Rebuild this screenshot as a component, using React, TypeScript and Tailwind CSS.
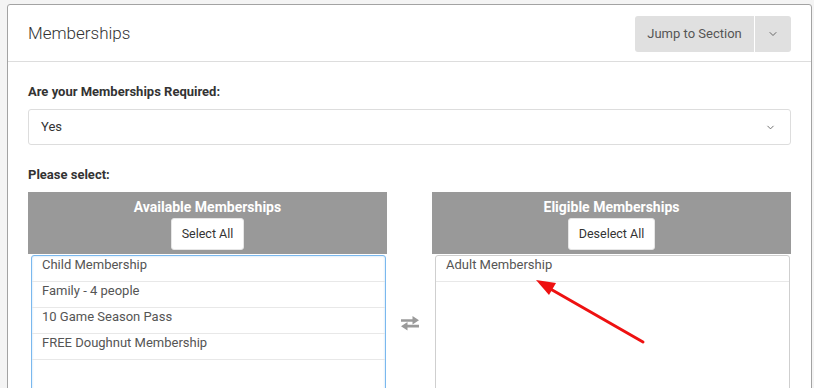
import { ChevronDown } from "lucide-react";

const available = ["Child Membership", "Family - 4 people", "10 Game Season Pass", "FREE Doughnut Membership"];
const eligible = ["Adult Membership"];

function ExchangeIcon() {
  return (
    <svg width="22" height="16" viewBox="0 0 22 16" fill="#9a9a9a">
      <path d="M2 4.2h11.5V1l6.5 4.3-6.5 4.2V6.8H2z" />
      <path d="M20 9.8H8.5V6.9L2 11.2l6.5 4.3v-3.1H20z" />
    </svg>
  );
}

function ListPanel({
  title,
  action,
  items,
  focused,
}: {
  title: string;
  action: string;
  items: string[];
  focused?: boolean;
}) {
  return (
    <div className="flex w-[359px] flex-col">
      <div className="flex h-[62px] flex-col items-center bg-[#999999] pt-[5px]">
        <div className="text-[14px] font-bold leading-[20px] text-white">{title}</div>
        <button className="mt-[1px] h-[32px] rounded-[3px] border border-[#e6e6e6] bg-white px-[10px] text-[12.5px] text-[#333]">
          {action}
        </button>
      </div>
      <div
        className={`ml-[3px] mr-[1px] mt-[1px] h-[140px] rounded-t-[3px] border ${
          focused ? "border-[#7ab8ee] shadow-[inset_0_0_2px_rgba(102,175,233,0.5)]" : "border-[#cfcfcf]"
        }`}
      >
        {items.map((item) => (
          <div
            key={item}
            className="h-[26px] border-b border-[#e8e8e8] pl-[10px] text-[13px] leading-[18px] text-[#555]"
          >
            {item}
          </div>
        ))}
      </div>
    </div>
  );
}

export default function App() {
  return (
    <div className="h-[388px] w-[814px] overflow-hidden bg-[#f4f4f4] pl-[7px] pt-[4px] font-['Roboto',sans-serif]">
      <div className="relative h-[400px] w-[805px] rounded-[3px] border border-[#a3a3a3] bg-white">
        <div className="flex h-[57px] items-center justify-between border-b border-[#dddddd] px-[20px] pt-[1px]">
          <h2 className="text-[17px] font-light text-[#333]">Memberships</h2>
          <div className="flex h-[36px] overflow-hidden rounded-[3px] bg-[#e0e0e0] text-[13px] text-[#555]">
            <button className="w-[120px] border-r border-white">Jump to Section</button>
            <button className="flex w-[36px] items-center justify-center">
              <ChevronDown size={12} strokeWidth={2} color="#666" />
            </button>
          </div>
        </div>

        <div className="px-[20px] pt-[21px]">
          <div className="text-[13px] font-bold leading-[18px] text-[#333]">Are your Memberships Required:</div>
          <div className="mt-[8px] flex h-[36px] items-center justify-between rounded-[3px] border border-[#dddddd] pl-[12px] pr-[14px] text-[13px] text-[#333]">
            <span>Yes</span>
            <ChevronDown size={11} strokeWidth={2} color="#666" />
          </div>

          <div className="mt-[21px] text-[13px] font-bold leading-[18px] text-[#333]">Please select:</div>

          <div className="mt-[8px] flex items-start justify-between">
            <ListPanel title="Available Memberships" action="Select All" items={available} focused />
            <div className="flex h-[200px] w-[45px] items-start justify-center pt-[123px]">
              <ExchangeIcon />
            </div>
            <ListPanel title="Eligible Memberships" action="Deselect All" items={eligible} />
          </div>
        </div>

        <svg className="absolute left-0 top-0" width="805" height="388" style={{ pointerEvents: "none" }}>
          <line x1="635" y1="337" x2="539" y2="282" stroke="#ee1111" strokeWidth="3" strokeLinecap="round" />
          <polygon points="528,275 548,278 541,290" fill="#ee1111" />
        </svg>
      </div>
    </div>
  );
}
